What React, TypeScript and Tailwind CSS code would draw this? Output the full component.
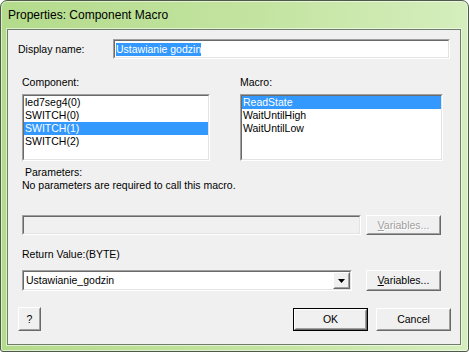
import React from "react";

const FONT = "font-['Liberation_Sans',Arial,sans-serif] text-[10.5px] leading-[13px] text-black";

function Sunken({ className = "", inner = "bg-white", children }: { className?: string; inner?: string; children?: React.ReactNode }) {
  return (
    <div className={`border border-t-[#a0a0a0] border-l-[#a0a0a0] border-b-white border-r-white ${className}`}>
      <div className={`h-full border border-t-[#696969] border-l-[#696969] border-b-[#e3e3e3] border-r-[#e3e3e3] ${inner}`}>{children}</div>
    </div>
  );
}

function Btn({ className = "", isDefault = false, disabled = false, children }: { className?: string; isDefault?: boolean; disabled?: boolean; children: React.ReactNode }) {
  const frame = isDefault ? "border border-black" : "";
  return (
    <div className={`${frame} ${className}`}>
      <div className="h-full border border-t-white border-l-white border-b-[#696969] border-r-[#696969]">
        <div
          className={`h-full flex items-center justify-center bg-[#f0f0f0] border border-t-[#f0f0f0] border-l-[#f0f0f0] border-b-[#a0a0a0] border-r-[#a0a0a0] ${
            disabled ? "text-[#a0a0a0] [text-shadow:1px_1px_0_#ffffff]" : "text-black"
          }`}
        >
          {children}
        </div>
      </div>
    </div>
  );
}

function ListBox({ className = "", items, selected }: { className?: string; items: string[]; selected: number }) {
  return (
    <Sunken className={className}>
      <div className="pt-[0px]">
        {items.map((it, i) => (
          <div key={it} className={`h-[13px] leading-[13px] pl-[1px] ${i === selected ? "bg-[#3399ff] text-white" : "text-black"}`}>
            {it}
          </div>
        ))}
      </div>
    </Sunken>
  );
}

export default function App() {
  return (
    <div className={`w-[469px] h-[352px] ${FONT}`}>
      <div className="w-full h-full flex flex-col rounded-t-[7px] rounded-b-[3px] border border-[#4d5a48] bg-[linear-gradient(to_right,#b4db8c,#c3e4a0_55%,#d5eebd)] shadow-[inset_0_0_0_1px_rgba(255,255,255,0.55)]">
        <div className="h-[28px] flex items-center pl-[7px] pt-[1px] font-['Liberation_Sans',Arial,sans-serif] text-[12px] text-black">
          Properties: Component Macro
        </div>
        <div className="ml-[6px] w-[454px] h-[316px] border border-[#6f7d6b] bg-[#f0f0f0] shadow-[0_0_0_1px_rgba(255,255,255,0.55)] flex flex-col">
          {/* display name */}
          <div className="mt-[9px] flex items-center pl-[10px]">
            <span className="w-[95px]">Display name:</span>
            <Sunken className="w-[337px] h-[20px]">
              <div className="h-full flex items-center pl-[1px]">
                <span className="bg-[#3399ff] text-white leading-[13px]">Ustawianie godzin</span>
              </div>
            </Sunken>
          </div>

          {/* lists */}
          <div className="mt-[17px] flex pl-[14px]">
            <div className="w-[188px] flex flex-col">
              <span>Component:</span>
              <ListBox className="mt-[5px] h-[67px]" items={["led7seg4(0)", "SWITCH(0)", "SWITCH(1)", "SWITCH(2)"]} selected={2} />
            </div>
            <div className="ml-[30px] w-[203px] flex flex-col">
              <span>Macro:</span>
              <ListBox className="mt-[5px] h-[67px]" items={["ReadState", "WaitUntilHigh", "WaitUntilLow"]} selected={0} />
            </div>
          </div>

          {/* parameters */}
          <div className="mt-[5px] pl-[17px]">Parameters:</div>
          <div className="pl-[14px]">No parameters are required to call this macro.</div>

          <div className="mt-[23px] flex pl-[14px]">
            <Sunken className="w-[339px] h-[20px]" inner="bg-[#f0f0f0]" />
            <Btn className="ml-[5px] w-[75px] h-[20px]" disabled>
              <span>
                <span className="underline">V</span>ariables...
              </span>
            </Btn>
          </div>

          <div className="mt-[13px] pl-[14px]">Return Value:(BYTE)</div>

          <div className="mt-[9px] flex pl-[14px]">
            <Sunken className="w-[330px] h-[21px]">
              <div className="h-full flex items-center">
                <span className="flex-1 pl-[2px]">Ustawianie_godzin</span>
                <Btn className="w-[17px] h-[17px]">
                  <svg width="7" height="4" viewBox="0 0 7 4">
                    <path d="M0 0h7L3.5 4z" fill="#000" />
                  </svg>
                </Btn>
              </div>
            </Sunken>
            <Btn className="ml-[14px] w-[75px] h-[21px]">
              <span>
                <span className="underline">V</span>ariables...
              </span>
            </Btn>
          </div>

          {/* bottom buttons */}
          <div className="mt-[16px] flex items-start pl-[10px] pr-[9px]">
            <Btn className="w-[23px] h-[24px]">?</Btn>
            <Btn className="ml-auto mt-[1px] w-[75px] h-[23px]" isDefault>
              OK
            </Btn>
            <Btn className="ml-[8px] mt-[1px] w-[75px] h-[23px]">Cancel</Btn>
          </div>
        </div>
      </div>
    </div>
  );
}
